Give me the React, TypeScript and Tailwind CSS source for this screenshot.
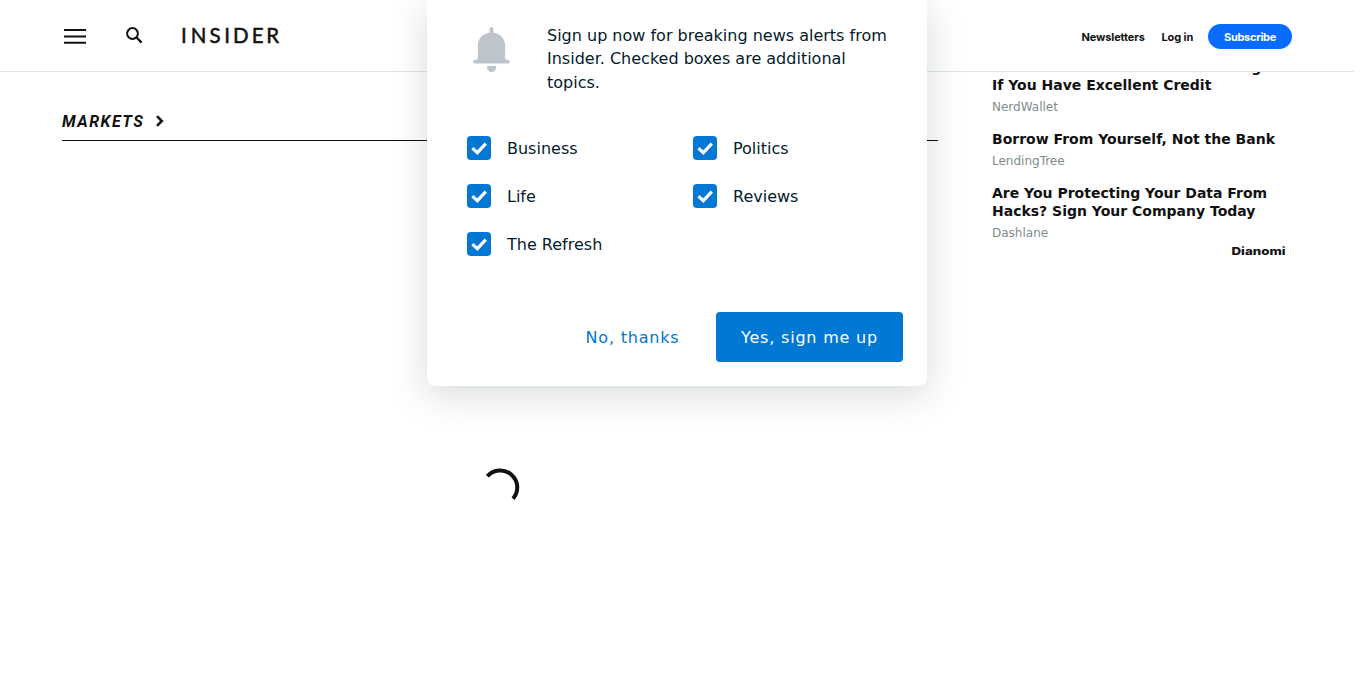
import React from "react";

const topics = ["Business", "Politics", "Life", "Reviews", "The Refresh"];

const ads = [
  { title: ["These 7 Credit Cards Are Amazing", "If You Have Excellent Credit"], source: "NerdWallet" },
  { title: ["Borrow From Yourself, Not the Bank"], source: "LendingTree" },
  { title: ["Are You Protecting Your Data From", "Hacks? Sign Your Company Today"], source: "Dashlane" },
];

function Header() {
  return (
    <header className="relative z-10 flex h-[72px] w-[1354px] items-center justify-between border-b border-[#dbe5e4] bg-white pr-[62px] pl-16">
      <div className="flex items-center">
        <button aria-label="Menu">
          <svg width="22" height="16" viewBox="0 0 22 16" stroke="#111" strokeWidth="2">
            <path d="M0 2h22M0 8.400h22M0 14.700h22" />
          </svg>
        </button>
        <button aria-label="Search" className="ml-10">
          <svg width="17" height="17" viewBox="0 0 17 17" fill="none" stroke="#111" strokeWidth="2">
            <circle cx="6.5" cy="6.5" r="5.4" />
            <path d="M10.3 10.3 15.6 15.6" strokeWidth="2.3" />
          </svg>
        </button>
        <svg className="ml-9 h-8 w-[116px] overflow-visible" viewBox="0 0 116 32" aria-label="Insider">
          <text x="1.9 11.7 30.6 45.200 54.100 72.700 87.300" y="23" fill="#111" stroke="#111" strokeWidth="0.5" className="font-['Lato',sans-serif] text-[20.5px] font-normal">
            INSIDER
          </text>
        </svg>
      </div>
      <nav className="flex items-center pt-0.5 font-['Inter',sans-serif] text-[11px] font-bold text-[#111]">
        <a className="w-[80px] pt-0.5 tracking-[-0.13px]">Newsletters</a>
        <a className="w-[46.5px] pt-0.5 tracking-[-0.1px]">Log in</a>
        <a className="flex h-[25px] w-[84px] items-center justify-center rounded-full bg-[#0a6cff] pt-0.5 tracking-[-0.3px] text-white">Subscribe</a>
      </nav>
    </header>
  );
}

function Bell() {
  return (
    <svg width="37" height="46" viewBox="0 0 38 46" preserveAspectRatio="none" fill="#bdc4cc">
      <path d="M19 0a2 2 0 0 1 2 2v3.7C28 6.6 33 11.500 33 18.500V30.500C33 32 34 33 35.500 33H36.200a1.700 1.700 0 0 1 0 3.500H1.800a1.700 1.700 0 0 1 0-3.500H2.500C4 33 5 32 5 30.500V18.500C5 11.500 10 6.600 17 5.700V2a2 2 0 0 1 2-2Z" />
      <path d="M14.500 39h9.200v1.400a4.600 4.600 0 0 1-9.200 0Z" />
    </svg>
  );
}

function SignUpDialog() {
  return (
    <div role="dialog" className="absolute top-0 left-[427px] z-20 h-[386px] w-[500px] rounded-b-lg bg-white font-['DejaVu_Sans',sans-serif] text-base text-[#051b2c] shadow-[0_8px_36px_rgba(4,28,44,0.17)]">
      <div className="flex pt-6 pl-[46px]">
        <div className="w-[74px] pt-[3px]"><Bell /></div>
        <p className="w-[350px] leading-[23.4px]">
          Sign up now for breaking news alerts from Insider. Checked boxes are additional topics.
        </p>
      </div>
      <div className="mt-[41.300px] ml-10 grid grid-cols-[226px_200px] gap-y-6">
        {topics.map((topic) => (
          <label key={topic} className="flex h-6 items-center gap-4">
            <span className="flex size-6 items-center justify-center rounded bg-[#0078d4]">
              <svg width="24" height="24" viewBox="0 0 24 24" fill="none" stroke="#fff" strokeWidth="3.2">
                <path d="m5.400 12.100 4.900 4.600 8.500-9" />
              </svg>
            </span>
            <span className="pt-0.5">{topic}</span>
          </label>
        ))}
      </div>
      <div className="mt-14 flex justify-end pr-6 tracking-[0.8px]">
        <button className="h-[50px] w-[167px] pt-0.5 text-[#0078d4]">No, thanks</button>
        <button className="h-[50px] w-[187px] rounded bg-[#0078d4] pt-0.5 text-white">Yes, sign me up</button>
      </div>
    </div>
  );
}

function Markets() {
  return (
    <section className="w-[876px]">
      <div className="flex h-[69px] items-end border-b border-[#111] pb-[6px]">
        <h2 className="font-['Roboto',sans-serif] text-base font-bold tracking-[1.5px] text-[#111] italic">MARKETS</h2>
        <svg className="mb-[7px] ml-[11px]" width="10" height="12" viewBox="0 0 10 12" fill="none" stroke="#111" strokeWidth="2.600">
          <path d="m2 1.200 4.800 4.800L2 10.800" />
        </svg>
      </div>
      <div className="flex justify-center pt-[327px]">
        <svg width="40" height="40" viewBox="0 0 40 40" fill="none" stroke="#111" strokeWidth="4">
          <path d="M7.400 8.200A16.800 16.800 0 0 1 33 30.700" />
        </svg>
      </div>
    </section>
  );
}

function Sidebar() {
  return (
    <aside className="-mt-[14px] w-[300px] font-['DejaVu_Sans',sans-serif]">
      <ul className="flex flex-col gap-[14px]">
        {ads.map((ad) => (
          <li key={ad.source}>
            <h3 className="text-sm leading-[18px] font-bold whitespace-nowrap text-[#111]">
              {ad.title.map((line) => <span key={line} className="block">{line}</span>)}
            </h3>
            <p className="mt-[5px] text-xs leading-[17px] text-[#7f8c8d]">{ad.source}</p>
          </li>
        ))}
      </ul>
      <svg className="mt-[3px] ml-[239px] h-3 w-[58px]" viewBox="0 0 58 12" aria-label="Dianomi">
        <text x="0.500" y="9.600" textLength="54" lengthAdjust="spacingAndGlyphs" fill="#111" className="font-['Inter',sans-serif] text-[11px] font-extrabold">
          Dianomi
        </text>
      </svg>
    </aside>
  );
}

export default function App() {
  return (
    <div className="relative h-[683px] overflow-hidden bg-white">
      <Header />
      <main className="flex gap-[54px] pl-[62px]">
        <Markets />
        <Sidebar />
      </main>
      <SignUpDialog />
    </div>
  );
}
